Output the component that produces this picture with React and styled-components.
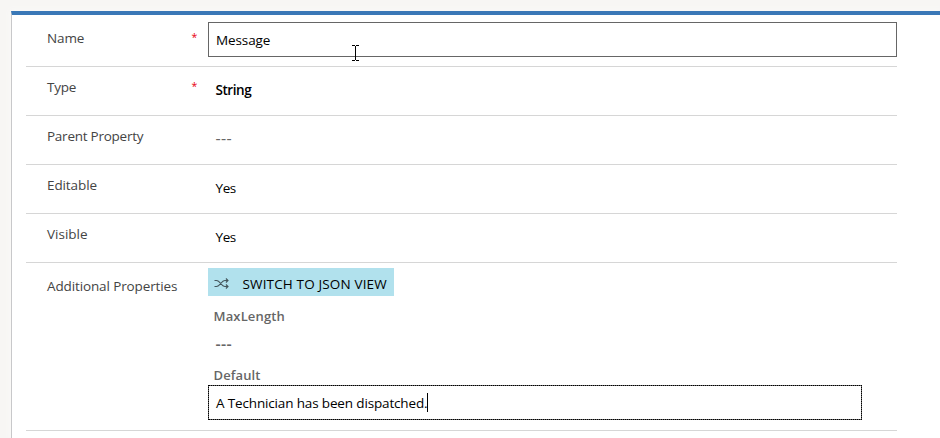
import React from "react";
import styled, { createGlobalStyle } from "styled-components";

const Global = createGlobalStyle`
  * { box-sizing: border-box; }
  body {
    margin: 0;
    background: #f7f6f4;
    font-family: "Segoe UI", "Open Sans", "Noto Sans", sans-serif;
    font-size: 13.5px;
    line-height: 20px;
    color: #000;
    overflow: hidden;
  }
`;

const Page = styled.div`
  height: 438px;
  padding: 11px 0 0 11px;
  overflow: hidden;
`;

const Panel = styled.main`
  height: 427px;
  background: #fff;
  border-top: 4px solid #3a78b7;
  border-left: 1px solid #c8c8ca;
  box-shadow: 0 0 6px 1px #faf9f8;
  padding: 2px 43px 0 14px;
`;

const Row = styled.section`
  display: grid;
  grid-template-columns: 144px 17px 1fr;
  height: ${(p) => p.$height || 49}px;
  padding-left: 21px;
  border-bottom: 1px solid #d6d6d6;
`;

const Text = styled.span`
  display: block;
  white-space: pre;
  letter-spacing: ${(p) => p.$spacing || 0}px;
`;

const Label = styled(Text)`
  color: #444;
  padding-top: ${(p) => p.$top}px;
`;

const Required = styled.span`
  color: #e8000d;
  font-size: 10.5px;
  line-height: 20px;
  padding: ${(p) => p.$top}px 0 0 0.5px;
`;

const Value = styled(Text)`
  padding: ${(p) => p.$top}px 0 0 7.5px;
  font-weight: ${(p) => p.$weight || 500};
  color: #000;
`;

const EmptyValue = styled(Value)`
  font-size: 16px;
  color: #666;
`;

const Field = styled.div`
  position: relative;
  display: flex;
  align-items: center;
  width: ${(p) => p.$width}px;
  height: 35px;
  margin-top: ${(p) => p.$top || 0}px;
  padding: 1px 0 0 7px;
  border: 1px solid #666;
  outline: ${(p) => (p.$focused ? "1px dotted #000" : "none")};
  outline-offset: -1px;
`;

const Caret = styled.i`
  width: 1px;
  height: 19px;
  margin-top: -2px;
  background: #000;
`;

const Pointer = styled.svg`
  position: absolute;
  left: 143px;
  top: 22px;
`;

const SwitchButton = styled.button`
  display: flex;
  align-items: center;
  width: 186px;
  height: 28px;
  margin: 5px 0 0;
  padding: 3px 0 0 6px;
  border: 0;
  background: #b1e1ed;
  font: inherit;
  color: #000;
  svg { margin: -1px 13.5px 0 0; flex: none; }
`;

const Stack = styled.div`
  min-width: 0;
`;

const SubLabel = styled(Text)`
  padding-left: 5.5px;
  margin-top: ${(p) => p.$top}px;
  font-weight: 600;
  font-size: 13px;
  color: #666;
`;

const ShuffleIcon = () => (
  <svg width="15" height="13" viewBox="0 0 15 13" fill="none" stroke="#44565c" strokeWidth="1.1">
    <path d="M.5 3.5H2.4Q3.4 3.5 4.4 4.2L9 8.8Q10 9.5 11 9.5H14M.5 9.5H2.4Q3.4 9.5 4.4 8.8L9 4.2Q10 3.5 11 3.5H14M11.9 1.5L14 3.5L11.9 5.5M11.9 7.5L14 9.5L11.9 11.5" />
  </svg>
);

export default function App() {
  return (
    <>
      <Global />
      <Page>
        <Panel>
          <Row $height={50}>
            <Label $top={11} $spacing={-0.1}>Name</Label>
            <Required $top={10}>*</Required>
            <Field $width={689} $top={5}>
              <Text $spacing={-0.1}>Message</Text>
              <Pointer width="7" height="16" viewBox="0 0 7 16" fill="none" stroke="#000">
                <path d="M0 .5H3M4 .5H7M3.5 1V15M0 15.5H3M4 15.5H7" shapeRendering="crispEdges" />
              </Pointer>
            </Field>
          </Row>
          <Row>
            <Label $top={10} $spacing={-0.2}>Type</Label>
            <Required $top={9}>*</Required>
            <Value $top={13} $weight={600} $spacing={-0.45}>String</Value>
          </Row>
          <Row>
            <Label $top={10} $spacing={-0.25}>Parent Property</Label>
            <span />
            <EmptyValue $top={12} $spacing={0.3}>---</EmptyValue>
          </Row>
          <Row>
            <Label $top={10} $spacing={-0.1}>Editable</Label>
            <span />
            <Value $top={13} $spacing={-0.4}>Yes</Value>
          </Row>
          <Row>
            <Label $top={10}>Visible</Label>
            <span />
            <Value $top={13} $spacing={-0.4}>Yes</Value>
          </Row>
          <Row $height={168}>
            <Label $top={13} $spacing={-0.12}>Additional Properties</Label>
            <span />
            <Stack>
              <SwitchButton>
                <ShuffleIcon />
                <Text $spacing={0.15}>SWITCH TO JSON VIEW</Text>
              </SwitchButton>
              <SubLabel $top={10} $spacing={0.15}>MaxLength</SubLabel>
              <EmptyValue $top={8} $weight={600} $spacing={0.3}>---</EmptyValue>
              <SubLabel $top={11} $spacing={0.1}>Default</SubLabel>
              <Field $width={654} $focused>
                <Text $spacing={-0.15}>A Technician has been dispatched.</Text>
                <Caret />
              </Field>
            </Stack>
          </Row>
        </Panel>
      </Page>
    </>
  );
}
